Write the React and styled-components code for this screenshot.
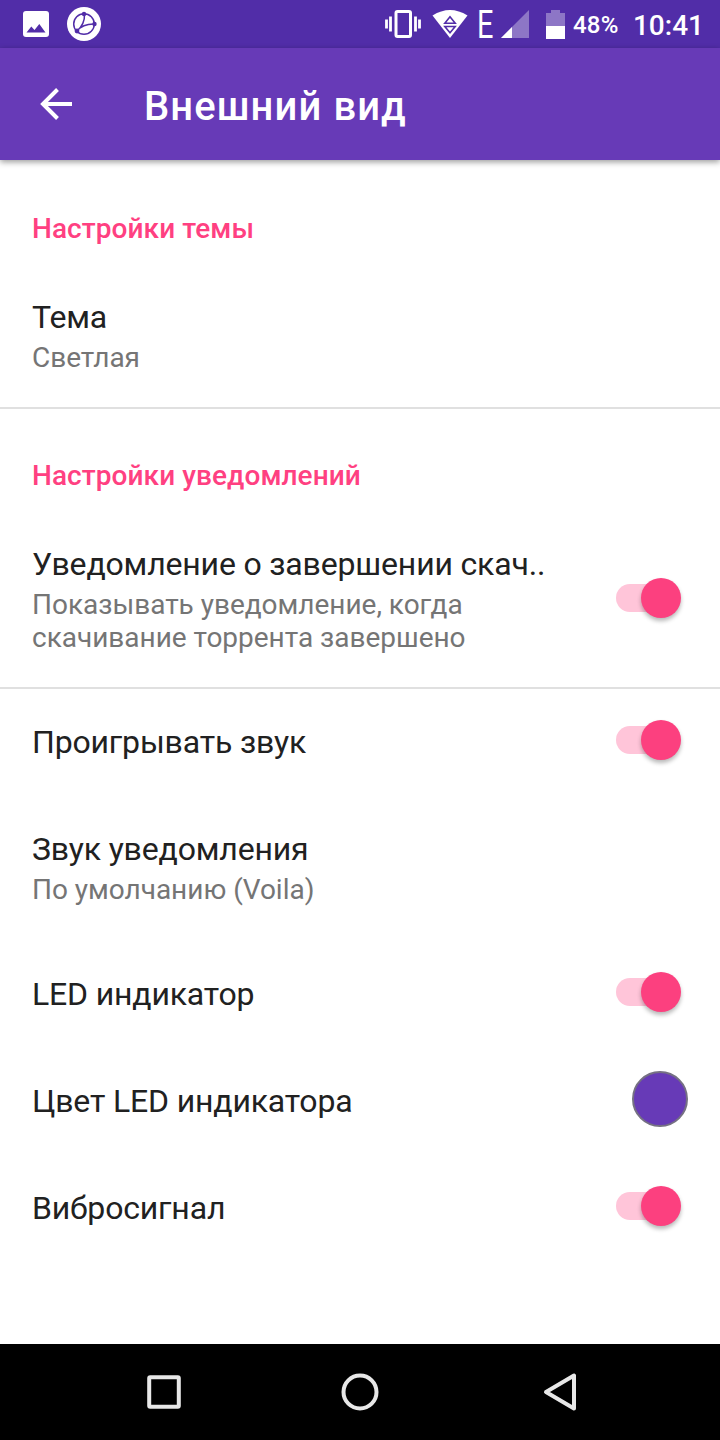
import React from "react";
import styled, { createGlobalStyle } from "styled-components";

const GlobalStyle = createGlobalStyle`
  * {
    box-sizing: border-box;
  }
  body {
    margin: 0;
    background: #fff;
    font-family: Roboto, "Noto Sans", sans-serif;
  }
`;

const Screen = styled.div`
  display: flex;
  flex-direction: column;
  width: 720px;
  height: 1440px;
  overflow: hidden;
  background: #fff;

  svg {
    display: block;
    flex-shrink: 0;
  }
`;

const StatusBar = styled.div`
  display: flex;
  align-items: center;
  justify-content: space-between;
  height: 48px;
  padding: 0 16px 0 23px;
  background: #512da8;
  color: #fff;
`;

const Notifications = styled.div`
  display: flex;
  align-items: center;
  gap: 18px;
`;

const SystemIcons = styled.div`
  display: flex;
  align-items: center;
`;

const Radios = styled.div`
  display: flex;
  align-items: center;
  gap: 11px;
  margin-right: 17px;
`;

const Network = styled.span`
  width: 13px;
  margin: 2px 0 0 -2px;
  font-size: 38px;
  line-height: 46px;
  transform: scaleX(0.76);
  transform-origin: 0 50%;
`;

const Percent = styled.span`
  width: 46px;
  margin: 2px 0 0 8px;
  font-size: 24px;
  font-weight: 500;
  letter-spacing: 0.2px;
`;

const Clock = styled.span`
  margin: 2px 0 0 14px;
  font-size: 28px;
  font-weight: 500;
`;

const Toolbar = styled.header`
  display: flex;
  align-items: center;
  gap: 72px;
  height: 112px;
  padding-left: 40px;
  background: #673ab7;
  box-shadow: 0 2px 6px rgba(0, 0, 0, 0.4);
  color: #fff;
`;

const Title = styled.h1`
  margin: 6px 0 0;
  font-size: 40px;
  font-weight: 500;
  line-height: 48px;
  letter-spacing: 1.08px;
`;

const Content = styled.main`
  flex: 1;
`;

const Category = styled.h2`
  height: ${(p) => (p.$first ? 104 : 102)}px;
  margin: 0;
  padding: ${(p) => (p.$first ? 50 : 48)}px 32px 0;
  color: #ff4081;
  font-size: 28px;
  font-weight: 500;
  line-height: 37px;
  letter-spacing: 0.07px;
`;

const Row = styled.div`
  display: flex;
  align-items: center;
  justify-content: space-between;
  padding: 32px 32px ${(p) => (p.$divider ? 30 : 32)}px;
  border-bottom: ${(p) => (p.$divider ? "2px solid #e0e0e0" : "none")};
`;

const Name = styled.div`
  color: #212121;
  font-size: 32px;
  line-height: 43px;
  letter-spacing: -0.17px;
  white-space: nowrap;
`;

const Summary = styled.div`
  padding: 2px 0 3px;
  color: #757575;
  font-size: 28px;
  line-height: 33px;
  letter-spacing: -0.02px;
  white-space: pre-line;
`;

const Track = styled.div`
  display: flex;
  align-items: center;
  justify-content: flex-end;
  width: 58px;
  height: 28px;
  margin: 0 14px 5px 0;
  border-radius: 14px;
  background: #ffc5d9;
`;

const Thumb = styled.div`
  flex-shrink: 0;
  width: 40px;
  height: 40px;
  margin-right: -7px;
  border-radius: 50%;
  background: #fc407f;
  box-shadow: 0 3px 4px rgba(0, 0, 0, 0.28);
`;

const Swatch = styled.div`
  width: 56px;
  height: 56px;
  margin: -9px 0 -4px;
  border: 2px solid #757083;
  border-radius: 50%;
  background: #673ab7;
`;

const NavBar = styled.nav`
  display: flex;
  align-items: center;
  justify-content: space-between;
  height: 96px;
  padding: 0 140px;
  background: #000;
`;

const Switch = () => (
  <Track>
    <Thumb />
  </Track>
);

const Preference = ({ name, summary, divider, children }) => (
  <Row $divider={divider}>
    <div>
      <Name>{name}</Name>
      {summary && <Summary>{summary}</Summary>}
    </div>
    {children}
  </Row>
);

const PictureIcon = () => (
  <svg width="26" height="26" viewBox="0 0 26 26">
    <rect width="26" height="26" rx="3" fill="#fff" />
    <path d="M3.5 21.5L8.3 15.5L11.5 19L16.3 13L22.5 21.5Z" fill="#512da8" />
  </svg>
);

const TorrentIcon = () => (
  <svg width="34" height="34" viewBox="0 0 34 34">
    <circle cx="17" cy="17" r="17" fill="#fff" />
    <g fill="none" stroke="#512da8" strokeWidth="1.5">
      <circle cx="17" cy="17" r="10.3" />
      <path d="M17.5 7Q18 17 10 24Q16 16.5 28 17" />
    </g>
    <g fill="#512da8">
      <circle cx="17" cy="7" r="2.2" />
      <circle cx="27.5" cy="17" r="2.2" />
      <circle cx="10" cy="24" r="2.4" />
    </g>
  </svg>
);

const VibrateIcon = () => (
  <svg width="36" height="28" viewBox="0 0 36 28">
    <rect x="11" y="1.5" width="14.5" height="25" rx="1.5" fill="none" stroke="#fff" strokeWidth="3" />
    <path d="M1.5 9.5V18.5M5.5 6.5V21.5M30.5 6.5V21.5M34.5 9.5V18.5" stroke="#fff" strokeWidth="2.8" />
  </svg>
);

const WifiIcon = () => (
  <svg width="36" height="28" viewBox="0 0 36 28">
    <path d="M0.5 5.5Q18 -5.5 35.5 5.5L18 28Z" fill="#fff" />
    <path d="M12.8 13.2L18 6.8L23.2 13.2ZM12.8 16.500H23.2L18 22.800Z" fill="none" stroke="#512da8" strokeWidth="1.6" />
  </svg>
);

const SignalIcon = () => (
  <svg width="28" height="28" viewBox="0 0 28 28">
    <path d="M0 28L28 0V28Z" fill="#fff" fillOpacity="0.35" />
    <path d="M0 28L11 17V28Z" fill="#fff" />
  </svg>
);

const BatteryIcon = () => (
  <svg width="19" height="29" viewBox="0 0 19 29">
    <path d="M0 3H5V0H14V3H19V16H0Z" fill="#fff" fillOpacity="0.35" />
    <path d="M0 16H19V29H0Z" fill="#fff" />
  </svg>
);

const BackArrow = () => (
  <svg width="32" height="32" viewBox="0 0 32 32">
    <path d="M32 16H3M17.5 1.5L3 16L17.5 30.5" fill="none" stroke="#fff" strokeWidth="4" />
  </svg>
);

const NavIcon = ({ children }) => (
  <svg width="48" height="48" viewBox="0 0 48 48" fill="none" stroke="#e8e8e8" strokeWidth="4" strokeLinejoin="round">
    {children}
  </svg>
);

export default function App() {
  return (
    <Screen>
      <GlobalStyle />
      <StatusBar>
        <Notifications>
          <PictureIcon />
          <TorrentIcon />
        </Notifications>
        <SystemIcons>
          <Radios>
            <VibrateIcon />
            <WifiIcon />
            <Network>E</Network>
            <SignalIcon />
          </Radios>
          <BatteryIcon />
          <Percent>48%</Percent>
          <Clock>10:41</Clock>
        </SystemIcons>
      </StatusBar>
      <Toolbar>
        <BackArrow />
        <Title>Внешний вид</Title>
      </Toolbar>
      <Content>
        <Category $first>Настройки темы</Category>
        <Preference name="Тема" summary="Светлая" divider />
        <Category>Настройки уведомлений</Category>
        <Preference
          name="Уведомление о завершении скач.."
          summary={"Показывать уведомление, когда\nскачивание торрента завершено"}
          divider
        >
          <Switch />
        </Preference>
        <Preference name="Проигрывать звук">
          <Switch />
        </Preference>
        <Preference name="Звук уведомления" summary="По умолчанию (Voila)" />
        <Preference name="LED индикатор">
          <Switch />
        </Preference>
        <Preference name="Цвет LED индикатора">
          <Swatch />
        </Preference>
        <Preference name="Вибросигнал">
          <Switch />
        </Preference>
      </Content>
      <NavBar>
        <NavIcon>
          <rect x="9.2" y="9.2" width="29.6" height="29.6" rx="1" />
        </NavIcon>
        <NavIcon>
          <circle cx="24" cy="24" r="16.5" />
        </NavIcon>
        <NavIcon>
          <path d="M14 24L42 7.5V40.5Z" />
        </NavIcon>
      </NavBar>
    </Screen>
  );
}
